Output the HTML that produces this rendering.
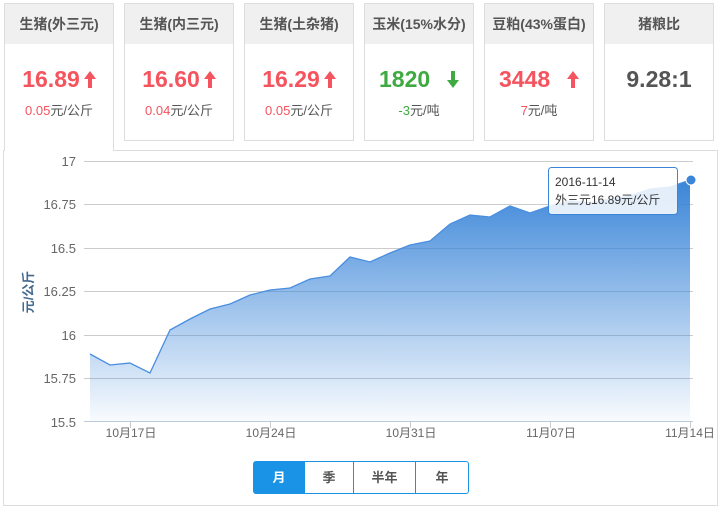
<!DOCTYPE html>
<html><head><meta charset="utf-8"><style>
body{margin:0;width:725px;height:510px;background:#fff;font-family:"Liberation Sans","Noto Sans CJK SC",sans-serif;position:relative;overflow:hidden}
.card{position:absolute;top:3px;width:108px;height:136px;border:1px solid #ddd;background:#fff;text-align:center}
.card .h{height:40px;background:#f0f0f0;line-height:40px;font-size:14px;font-weight:bold;color:#555}
.card .v{margin-top:20px;font-size:23px;font-weight:bold;line-height:30px}
.card .v svg{vertical-align:-1px;margin-left:4px}
.card .s{margin-top:6px;font-size:13px;color:#555}
.r{color:#f5535e}.g{color:#3faa41}
.chart{position:absolute;left:3px;top:150px;width:713px;height:354px;border:1px solid #ddd}
.btns{position:absolute;left:253px;top:461px;width:214px;height:31px;border:1px solid #1a93e6;border-radius:3px;display:flex;font-size:13px;font-weight:bold;color:#555}
.btns div{flex:1;text-align:center;line-height:31px;border-left:1px solid #1a93e6}
.btns div:first-child{border:none;background:#1a93e6;color:#fff;flex:0 0 50px}
.btns div:nth-child(2){flex:0 0 48px}.btns div:nth-child(3){flex:0 0 61px}
</style></head><body>
<div class="chart"></div>
<div class="card" style="left:4px;height:147px;border-bottom:none"><div class="h">生猪(外三元)</div><div class="v r">16.89<svg width="12" height="17" viewBox="0 0 12 17"><path d="M6 0L12 8H8V17H4V8H0Z" fill="#f5535e"/></svg></div><div class="s"><span class="r">0.05</span>元/公斤</div></div>
<div class="card" style="left:124px"><div class="h">生猪(内三元)</div><div class="v r">16.60<svg width="12" height="17" viewBox="0 0 12 17"><path d="M6 0L12 8H8V17H4V8H0Z" fill="#f5535e"/></svg></div><div class="s"><span class="r">0.04</span>元/公斤</div></div>
<div class="card" style="left:244px"><div class="h">生猪(土杂猪)</div><div class="v r">16.29<svg width="12" height="17" viewBox="0 0 12 17"><path d="M6 0L12 8H8V17H4V8H0Z" fill="#f5535e"/></svg></div><div class="s"><span class="r">0.05</span>元/公斤</div></div>
<div class="card" style="left:364px"><div class="h">玉米(15%水分)</div><div class="v g">1820 &nbsp;<svg width="12" height="17" viewBox="0 0 12 17"><path d="M6 17L12 9H8V0H4V9H0Z" fill="#3faa41"/></svg></div><div class="s"><span class="g">-3</span>元/吨</div></div>
<div class="card" style="left:484px"><div class="h">豆粕(43%蛋白)</div><div class="v r">3448 &nbsp;<svg width="12" height="17" viewBox="0 0 12 17"><path d="M6 0L12 8H8V17H4V8H0Z" fill="#f5535e"/></svg></div><div class="s"><span class="r">7</span>元/吨</div></div>
<div class="card" style="left:604px"><div class="h">猪粮比</div><div class="v" style="color:#555">9.28:1</div></div>
<svg style="position:absolute;left:0;top:0" width="725" height="510" font-family="Liberation Sans,Noto Sans CJK SC,sans-serif">
<defs><linearGradient id="gr" x1="0" y1="0" x2="0" y2="1"><stop offset="0" stop-color="#3a85d8"/><stop offset="1" stop-color="#3a85d8" stop-opacity="0.03"/></linearGradient></defs>
<g stroke="#ccc" stroke-width="1">
<line x1="84" x2="693" y1="161.5" y2="161.5"/><line x1="84" x2="693" y1="204.5" y2="204.5"/><line x1="84" x2="693" y1="248.5" y2="248.5"/><line x1="84" x2="693" y1="291.5" y2="291.5"/><line x1="84" x2="693" y1="335.5" y2="335.5"/><line x1="84" x2="693" y1="378.5" y2="378.5"/>
<line x1="84" x2="693" y1="421.5" y2="421.5" stroke="#c0cbd8"/>
<line x1="130.5" x2="130.5" y1="422" y2="428"/><line x1="270.5" x2="270.5" y1="422" y2="428"/><line x1="410.5" x2="410.5" y1="422" y2="428"/><line x1="550.5" x2="550.5" y1="422" y2="428"/><line x1="690.5" x2="690.5" y1="422" y2="428"/>
</g>
<polygon fill="url(#gr)" points="90,422 90,354 110,365 130,363 150,373 170,330 190,319 210,309 230,304 250,295 270,290 290,288 310,279 330,276 350,257 370,262 390,253 410,245 430,241 450,224 470,215 490,217 510,206 530,213 550,206 570,201 590,203 610,199 630,196 650,189 670,187 690,180 690,422"/>
<polyline fill="none" stroke="#4a8ee0" stroke-width="1.3" points="90,354 110,365 130,363 150,373 170,330 190,319 210,309 230,304 250,295 270,290 290,288 310,279 330,276 350,257 370,262 390,253 410,245 430,241 450,224 470,215 490,217 510,206 530,213 550,206 570,201 590,203 610,199 630,196 650,189 670,187 690,180"/>
<circle cx="691" cy="180" r="5" fill="#3a85d8" stroke="#fff" stroke-width="1"/>
<g font-size="13" fill="#666" text-anchor="end">
<text x="76" y="166">17</text><text x="76" y="209">16.75</text><text x="76" y="253">16.5</text><text x="76" y="296">16.25</text><text x="76" y="340">16</text><text x="76" y="383">15.75</text><text x="76" y="427">15.5</text></g>
<g font-size="12" fill="#666" text-anchor="middle">
<text x="131" y="437">10月17日</text><text x="271" y="437">10月24日</text><text x="411" y="437">10月31日</text><text x="551" y="437">11月07日</text><text x="690" y="437">11月14日</text></g>
<text transform="translate(33,292) rotate(-90)" font-size="13" fill="#44698f" text-anchor="middle" font-weight="bold">元/公斤</text>
<rect x="548.5" y="167.5" width="129" height="47" rx="3" fill="#fff" fill-opacity="0.85" stroke="#3a85d8"/>
<text x="555" y="186" font-size="12" fill="#333">2016-11-14</text>
<text x="555" y="204" font-size="12" fill="#333">外三元16.89元/公斤</text>
</svg>
<div class="btns"><div>月</div><div>季</div><div>半年</div><div>年</div></div>
</body></html>
